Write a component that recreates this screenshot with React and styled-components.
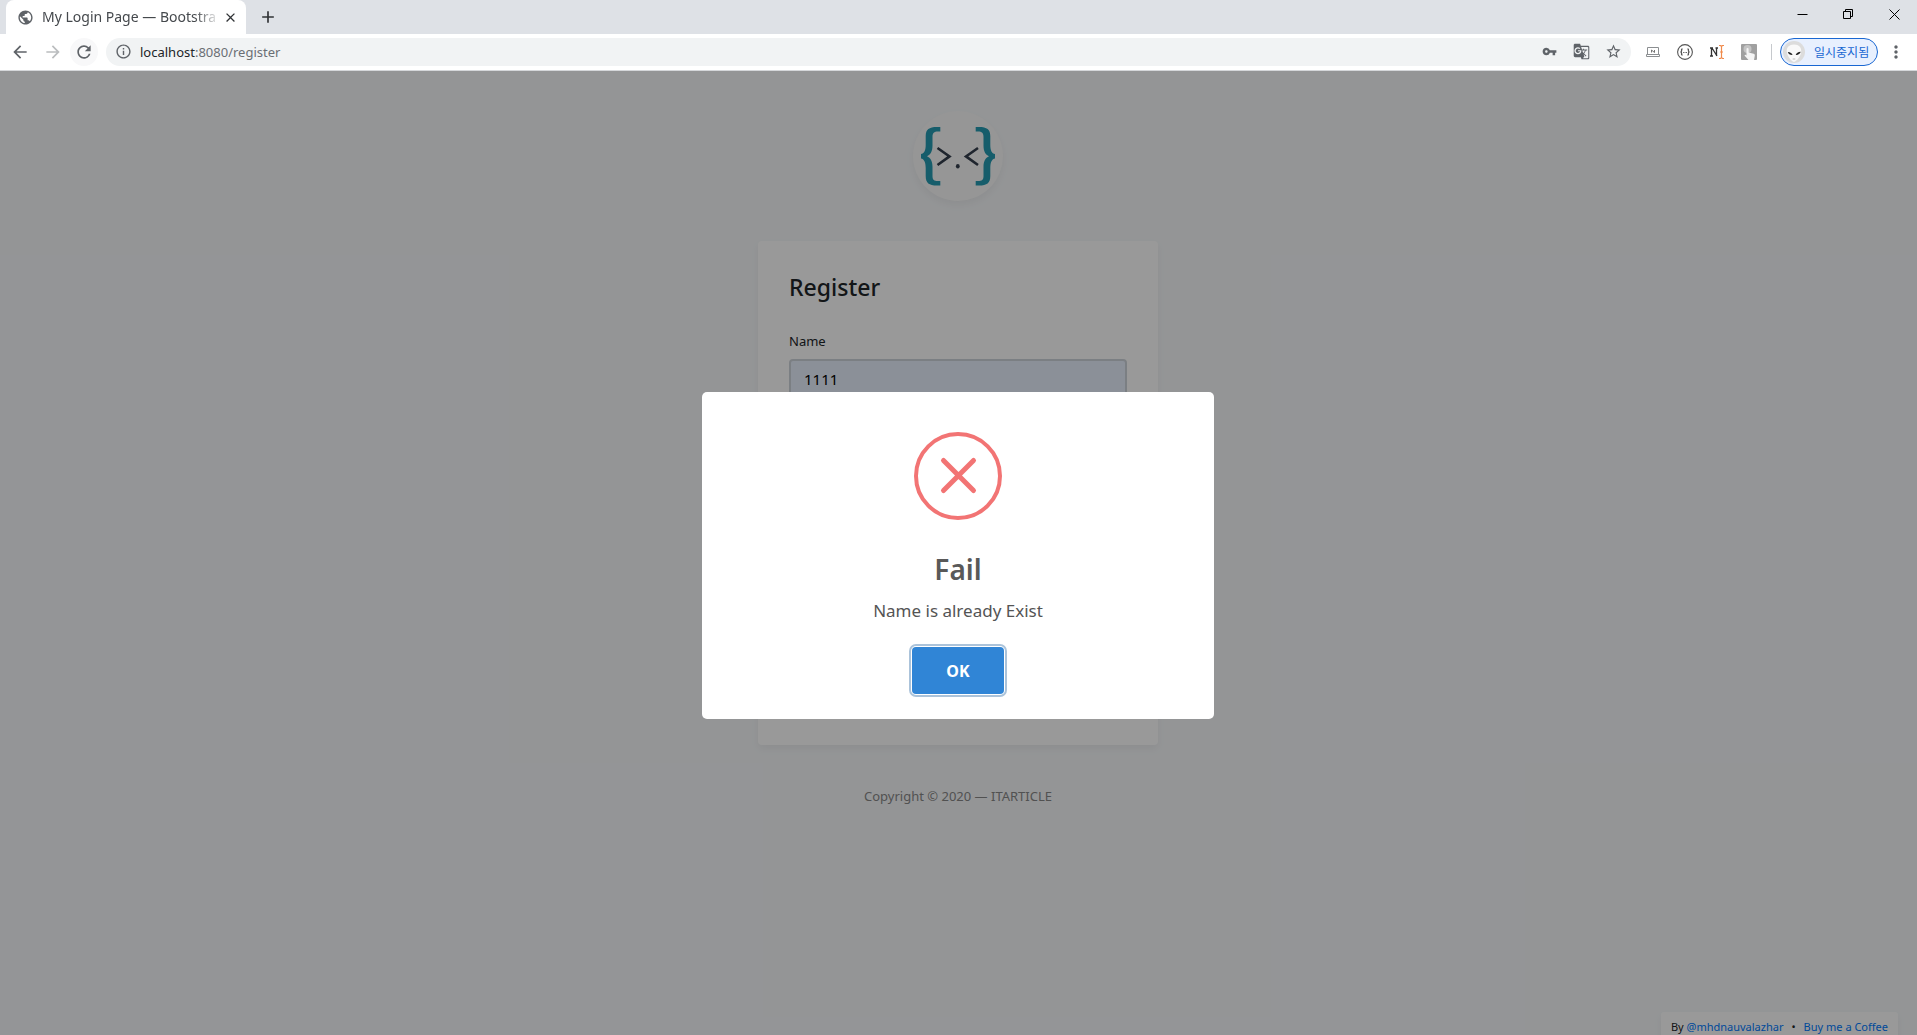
import React from 'react';
import styled, { createGlobalStyle } from 'styled-components';
import {
  MdAdd,
  MdArrowBack,
  MdArrowForward,
  MdClose,
  MdGTranslate,
  MdInfoOutline,
  MdMoreVert,
  MdPublic,
  MdRefresh,
  MdStarBorder,
  MdVpnKey,
} from 'react-icons/md';

const theme = {
  font: '"Noto Sans", "Open Sans", "Noto Sans CJK KR", sans-serif',
  chromeFont: '"Noto Sans CJK KR", "Noto Sans", sans-serif',
  tabStrip: '#dee1e6',
  omnibox: '#f1f3f4',
  icon: '#5f6368',
  blue: '#1967d2',
  page: '#f7f9fb',
  text: '#212529',
  link: '#007bff',
  red: '#f27474',
};

const GlobalStyle = createGlobalStyle`
  * {
    box-sizing: border-box;
  }
  body {
    margin: 0;
    overflow: hidden;
    font-family: ${theme.font};
    color: ${theme.text};
  }
  button {
    font-family: inherit;
    cursor: pointer;
  }
  svg {
    display: block;
    flex-shrink: 0;
  }
`;

const Browser = styled.div`
  display: flex;
  flex-direction: column;
  height: 100vh;
`;

const TabStrip = styled.div`
  display: flex;
  align-items: center;
  height: 34px;
  padding-left: 6px;
  background: ${theme.tabStrip};
`;

const Tab = styled.div`
  display: flex;
  align-items: center;
  width: 240px;
  height: 34px;
  padding: 0 8px 0 11px;
  border-radius: 8px 8px 0 0;
  background: #fff;
  color: ${theme.icon};
`;

const TabTitle = styled.span`
  flex: 1;
  min-width: 0;
  margin: 0 2px 0 8px;
  overflow: hidden;
  white-space: nowrap;
  font-size: 14px;
  line-height: 20px;
  color: #45494d;
  mask-image: linear-gradient(to right, #000 86%, transparent);
`;

const BareButton = styled.button`
  display: flex;
  align-items: center;
  justify-content: center;
  width: ${props => props.$width || 16}px;
  height: ${props => props.$height || 16}px;
  padding: 0;
  border: 0;
  border-radius: ${props => props.$round ? '50%' : 0};
  background: ${props => props.$tint || 'transparent'};
  color: ${props => props.$color || theme.icon};
`;

const NewTab = styled.div`
  margin-left: 8px;
`;

const WindowControls = styled.div`
  display: flex;
  align-self: flex-start;
  margin-left: auto;
`;

const Toolbar = styled.div`
  display: flex;
  align-items: center;
  height: 37px;
  padding: 0 5px 1px 4px;
  border-bottom: 1px solid #d5d7da;
  background: #fff;
`;

const NavButtons = styled.div`
  display: flex;
  align-items: center;
  margin-right: 8px;
`;

const Omnibox = styled.div`
  display: flex;
  align-items: center;
  flex: 1;
  height: 28px;
  padding: 0 2px 0 9px;
  border-radius: 14px;
  background: ${theme.omnibox};
  color: ${theme.icon};
`;

const Address = styled.div`
  flex: 1;
  margin-left: 8px;
  font-size: 13px;
  line-height: 20px;
  color: #6b6f74;

  b {
    font-weight: 400;
    color: ${theme.text};
  }
`;

const Extensions = styled.div`
  display: flex;
  align-items: center;
  margin-left: 6px;
`;

const Divider = styled.div`
  width: 1px;
  height: 16px;
  margin: 0 8px 0 6px;
  background: #c6c9cd;
`;

const ProfileButton = styled.button`
  display: flex;
  align-items: center;
  gap: 9px;
  width: 98px;
  height: 28px;
  margin-right: 2px;
  padding: 0 0 0 2px;
  border: 1px solid ${theme.blue};
  border-radius: 14px;
  background: #e8f0fe;
  color: ${theme.blue};

  span {
    font-family: ${theme.chromeFont};
    font-size: 12px;
    line-height: 16px;
  }
`;

const Viewport = styled.div`
  position: relative;
  flex: 1;
  overflow: hidden;
  background: ${theme.page};
`;

const Container = styled.main`
  display: flex;
  flex-direction: column;
  align-items: center;
  padding-right: 1px;
`;

const Brand = styled.div`
  width: 90px;
  height: 90px;
  margin: 40px 0;
  border-radius: 50%;
  overflow: hidden;
  background: #fafafa;
  box-shadow: 0 4px 8px rgba(0, 0, 0, 0.05);
`;

const Card = styled.form`
  width: 400px;
  min-height: 504px;
  padding: 30px 31px;
  border-radius: 4px;
  background: #fff;
  box-shadow: 0 4px 8px rgba(0, 0, 0, 0.05);
`;

const CardTitle = styled.h4`
  margin: 0 0 26px;
  font-size: 23px;
  font-weight: 500;
  line-height: 32px;
`;

const Label = styled.label`
  display: block;
  margin-bottom: 6px;
  font-size: 13px;
  line-height: 24px;
`;

const TextInput = styled.input`
  display: block;
  width: 100%;
  height: 40px;
  padding: 6px 13px;
  border: 2px solid #ced4da;
  border-radius: 4px;
  outline: 0;
  background: #e8f0fe;
  color: #000;
  font-family: inherit;
  font-size: 15px;
`;

const Footer = styled.footer`
  margin: 39px 0;
  font-size: 13px;
  line-height: 24px;
  color: #888;
`;

const Credits = styled.div`
  position: absolute;
  right: 19px;
  bottom: 0;
  padding: 7px 10px 0;
  border-radius: 3px 3px 0 0;
  background: #fff;
  box-shadow: 0 4px 8px rgba(0, 0, 0, 0.05);
  font-size: 11px;
  line-height: 16px;

  a {
    color: ${theme.link};
    text-decoration: none;
  }
`;

const Bullet = styled.span`
  margin: 0 8px;
`;

const Overlay = styled.div`
  position: absolute;
  inset: 0;
  display: flex;
  align-items: center;
  justify-content: center;
  padding: 5px 1px 0 0;
  background: rgba(0, 0, 0, 0.4);
`;

const Modal = styled.div`
  display: flex;
  flex-direction: column;
  align-items: center;
  width: 512px;
  padding: 40px 20px 25px;
  border-radius: 5px;
  background: #fff;
`;

const ModalTitle = styled.h2`
  margin: 29px 0 0;
  font-size: 28px;
  font-weight: 600;
  line-height: 40px;
  color: #595959;
`;

const ModalText = styled.p`
  margin: 8px 0 23px;
  font-size: 17px;
  line-height: 27px;
  color: #545454;
`;

const ConfirmButton = styled.button`
  width: 92px;
  height: 47px;
  border: 0;
  border-radius: 4px;
  background: #3085d6;
  box-shadow: 0 0 0 1px #fff, 0 0 0 3px #abc3da;
  color: #fff;
  font-size: 16px;
  font-weight: 700;
`;

const BRACE =
  'M27.3 16H24C16 16 12.7 18.5 12.7 25v9c0 5.500-1.700 8.500-4.700 9v4.500c3 .5 4.700 3.500 4.700 9.500v8c0 7 3.300 9.500 11.300 9.500h3.300V70H25c-4 0-5.500-1-5.500-5v-9c0-6-2-9-5.500-10.700 3.500-1.800 5.500-4.800 5.500-10.800V26c0-4 1.500-5.500 5.500-5.500h2.300z';

function Logo() {
  return (
    <svg width="90" height="90" viewBox="0 0 90 90" role="img" aria-label="Logo">
      <path d={BRACE} fill="#269bb2" />
      <path d={BRACE} fill="#269bb2" transform="matrix(-1 0 0 1 90 0)" />
      <g fill="none" stroke="#343e4d" strokeWidth="2.600">
        <path d="M24.500 37 36.500 45.400 24.500 54" />
        <path d="M65 37 53 45.400 65 54" />
      </g>
      <ellipse cx="44.800" cy="55.300" rx="1.900" ry="2.300" fill="#343e4d" />
    </svg>
  );
}

function ErrorIcon() {
  return (
    <svg width="88" height="88" viewBox="0 0 88 88" fill="none" stroke={theme.red}>
      <circle cx="44" cy="44" r="42" strokeWidth="4" />
      <path d="M29.500 28.500 59.500 58.500M59.500 28.500 29.500 58.500" strokeWidth="5" strokeLinecap="round" />
    </svg>
  );
}

function LaptopIcon() {
  return (
    <svg width="14" height="12" viewBox="0 0 14 12" fill="none" stroke="#8b8e91">
      <path d="M1.500 8.500v-7h11v7M.5 8.500h13v2H.5z" />
      <path d="M5.500 6.500v-2.500l3 2.500V4" stroke="#777" />
    </svg>
  );
}

function BracesIcon() {
  return (
    <svg width="16" height="16" viewBox="0 0 16 16" fill="none" stroke="#555">
      <circle cx="8" cy="8" r="7.400" strokeWidth="1.100" />
      <path d="M5.500 5c-1.200 0-.9.800-.9 1.600S4.300 8 3.500 8c.8 0 1.100.600 1.100 1.400s-.3 1.600.9 1.600M10.500 5c1.200 0 .9.800.9 1.600S11.700 8 12.500 8c-.8 0-1.100.600-1.100 1.400s.3 1.600-.9 1.600" strokeWidth="1.300" />
      <path d="M6.200 8.500h.9M7.600 8.500h.9M9 8.500h.9" />
    </svg>
  );
}

function NotesIcon() {
  return (
    <svg width="16" height="16" viewBox="0 0 16 16" fill="none">
      <path d="M1 4h3M1 12h3M6.500 4H9M2.500 4v8M7.500 4v8M3 4l5 8" stroke="#333" strokeWidth="1.300" />
      <path d="M10 1.500h1.500l1 1 1-1H15M12.500 2.500v11M10 14.500h1.500l1-1 1 1H15M11 8h3" stroke="#f08a4b" strokeWidth="1.200" />
    </svg>
  );
}

function TouchIcon() {
  return (
    <svg width="16" height="16" viewBox="0 0 16 16">
      <rect width="16" height="16" rx="1" fill="#a0a0a0" />
      <circle cx="6.500" cy="5" r="4" fill="#c4c4c4" />
      <path d="M5.500 5a1 1 0 0 1 2.100 0v3.500l5 1.200c1 .3 1.400.9 1.200 1.800L13 16H7.500l-4-4.600c.4-.9 1.200-.8 2 0z" fill="#f5f5f5" />
    </svg>
  );
}

function AlienAvatar() {
  return (
    <svg width="22" height="22" viewBox="0 0 22 22">
      <circle cx="11" cy="11" r="11" fill="#dcdcdc" />
      <path d="M11 3.500c5 0 7.500 3 7.200 7-.3 4.500-4.200 9.500-7.200 10.500-3-1-6.900-6-7.200-10.500-.3-4 2.200-7 7.200-7z" fill="#f9f9f9" />
      <path d="M4.800 11c2.600.2 4.300 1.200 4.700 2.900-2.400.1-4.200-.9-4.700-2.900zM17.700 10.800c-2.600.2-4.500 1.300-5 3.100 2.400.2 4.500-.9 5-3.100z" fill="#222" />
      <path d="M9.700 18h2.600" stroke="#bbb" />
    </svg>
  );
}

const windowButtons = [
  { label: 'Minimize', path: 'M.5 5.500h10' },
  { label: 'Restore', path: 'M.5 2.500h7v7h-7zM2.500 2.500v-2h7v7h-2' },
  { label: 'Close', path: 'M.5.5l10 10M10.500.5l-10 10' },
];

const extensions = [
  { label: 'Screen', icon: <LaptopIcon /> },
  { label: 'JSON viewer', icon: <BracesIcon /> },
  { label: 'Notes', icon: <NotesIcon /> },
  { label: 'Touch', icon: <TouchIcon /> },
];

function BrowserChrome() {
  return (
    <>
      <TabStrip>
        <Tab>
          <MdPublic size={17} />
          <TabTitle>My Login Page — Bootstra</TabTitle>
          <BareButton aria-label="Close tab" $color="#303336"><MdClose size={15} /></BareButton>
        </Tab>
        <NewTab>
          <BareButton aria-label="New tab" $width={28} $height={28} $color="#303336"><MdAdd size={20} /></BareButton>
        </NewTab>
        <WindowControls>
          {windowButtons.map(({ label, path }) => (
            <BareButton key={label} aria-label={label} $width={46} $height={28}>
              <svg width="11" height="11" viewBox="0 0 11 11" fill="none" stroke="#000"><path d={path} /></svg>
            </BareButton>
          ))}
        </WindowControls>
      </TabStrip>
      <Toolbar>
        <NavButtons>
          <BareButton aria-label="Back" $width={32} $height={28}><MdArrowBack size={20} /></BareButton>
          <BareButton aria-label="Forward" $width={34} $height={28} $color="#bbbdbf"><MdArrowForward size={20} /></BareButton>
          <BareButton aria-label="Reload" $width={28} $height={28} $round $tint="#f8f8f9"><MdRefresh size={20} /></BareButton>
        </NavButtons>
        <Omnibox>
          <MdInfoOutline size={17} />
          <Address><b>localhost</b>:8080/register</Address>
          <BareButton aria-label="Passwords" $width={32} $height={28}><MdVpnKey size={15} /></BareButton>
          <BareButton aria-label="Translate" $width={32} $height={28}><MdGTranslate size={17} /></BareButton>
          <BareButton aria-label="Bookmark" $width={32} $height={28}><MdStarBorder size={17} /></BareButton>
        </Omnibox>
        <Extensions>
          {extensions.map(({ label, icon }) => (
            <BareButton key={label} aria-label={label} $width={32} $height={28}>{icon}</BareButton>
          ))}
        </Extensions>
        <Divider />
        <ProfileButton>
          <AlienAvatar />
          <span>일시중지됨</span>
        </ProfileButton>
        <BareButton aria-label="Menu" $width={32} $height={28}><MdMoreVert size={20} /></BareButton>
      </Toolbar>
    </>
  );
}

export default function App() {
  return (
    <Browser>
      <GlobalStyle />
      <BrowserChrome />
      <Viewport>
        <Container>
          <Brand><Logo /></Brand>
          <Card>
            <CardTitle>Register</CardTitle>
            <Label htmlFor="name">Name</Label>
            <TextInput id="name" type="text" defaultValue="1111" />
          </Card>
          <Footer>Copyright © 2020 — ITARTICLE</Footer>
        </Container>
        <Credits>
          By <a href="#author">@mhdnauvalazhar</a>
          <Bullet>•</Bullet>
          <a href="#coffee">Buy me a Coffee</a>
        </Credits>
        <Overlay>
          <Modal role="dialog" aria-labelledby="modal-title">
            <ErrorIcon />
            <ModalTitle id="modal-title">Fail</ModalTitle>
            <ModalText>Name is already Exist</ModalText>
            <ConfirmButton type="button">OK</ConfirmButton>
          </Modal>
        </Overlay>
      </Viewport>
    </Browser>
  );
}
